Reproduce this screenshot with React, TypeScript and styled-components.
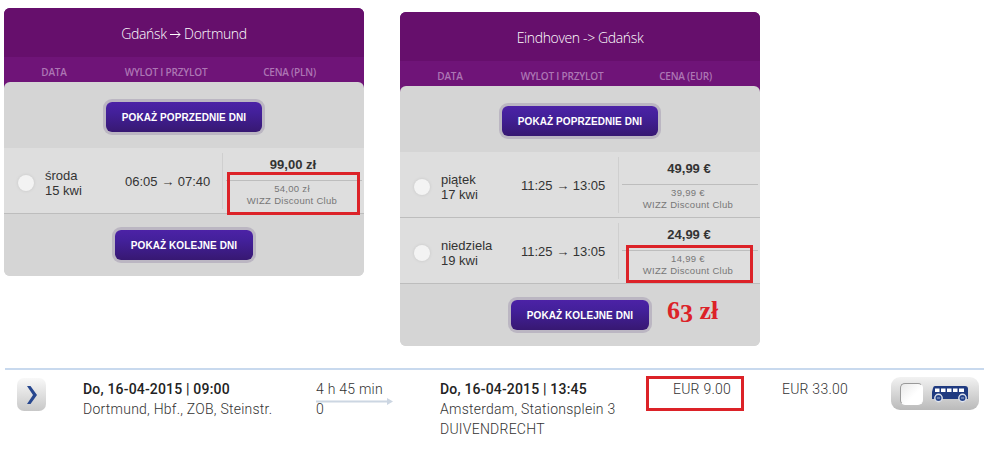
import React, { FunctionComponent } from "react";
import styled, { createGlobalStyle } from "styled-components";

interface Flight {
	day: string;
	date: string;
	hours: string;
	price: string;
	discount: string;
	marked?: boolean;
	wideMark?: boolean;
}

interface FlightCardProps {
	title: React.ReactNode;
	currency: string;
	flights: Flight[];
	children?: React.ReactNode;
}

const FlightCard: FunctionComponent<FlightCardProps> = ({
	title,
	currency,
	flights,
	children,
}) => (
	<Card>
		<Title>{title}</Title>
		<Columns>
			<Column>DATA</Column>
			<Column>WYLOT I PRZYLOT</Column>
			<Column>CENA ({currency})</Column>
		</Columns>
		<CardBody>
			<ButtonBar>
				<DaysButton $width={156}>POKAŻ POPRZEDNIE DNI</DaysButton>
			</ButtonBar>
			{flights.map((flight) => (
				<FlightRow key={flight.date}>
					<Radio />
					<Day>
						{flight.day}
						<br />
						{flight.date}
					</Day>
					<Hours>{flight.hours}</Hours>
					<Prices>
						<Price>{flight.price}</Price>
						<Discount>
							{flight.discount}
							<br />
							WIZZ Discount Club
							{flight.marked && <Mark $wide={flight.wideMark} />}
						</Discount>
					</Prices>
				</FlightRow>
			))}
			<ButtonBar>
				<DaysButton $width={138}>POKAŻ KOLEJNE DNI</DaysButton>
				{children}
			</ButtonBar>
		</CardBody>
	</Card>
);

const TitleArrow = () => (
	<svg width="11" height="9" viewBox="0 0 11 9">
		<path d="M0 4.500h10M6.500 1l3.500 3.500L6.500 8" fill="none" stroke="#fff" />
	</svg>
);

const BusIcon = () => (
	<svg width="37" height="18" viewBox="0 0 37 18">
		<path d="M3 1h30q3 0 3 3v10H0V7l1-4q.500-2 2-2z" fill="#1f3a80" />
		<path
			d="M3 3.500h4.500V7H3zM9 3.500h4.500V7H9zM15 3.500h4.500V7H15zM21 3.500h4.500V7H21zM27 3.500h5V7h-5z"
			fill="#fff"
		/>
		<circle cx="6.500" cy="13" r="3.700" fill="#27458c" stroke="#dfe3ec" strokeWidth="1.400" />
		<circle cx="30.500" cy="13" r="3.700" fill="#27458c" stroke="#dfe3ec" strokeWidth="1.400" />
		<path d="M5 13h3M29 13h3" stroke="#aab6d2" />
	</svg>
);

const App = () => (
	<Page>
		<GlobalStyle />
		<Cards>
			<FlightCard
				title={
					<>
						Gdańsk <TitleArrow /> Dortmund
					</>
				}
				currency="PLN"
				flights={[
					{
						day: "środa",
						date: "15 kwi",
						hours: "06:05 → 07:40",
						price: "99,00 zł",
						discount: "54,00 zł",
						marked: true,
						wideMark: true,
					},
				]}
			/>
			<FlightCard
				title="Eindhoven -> Gdańsk"
				currency="EUR"
				flights={[
					{
						day: "piątek",
						date: "17 kwi",
						hours: "11:25 → 13:05",
						price: "49,99 €",
						discount: "39,99 €",
					},
					{
						day: "niedziela",
						date: "19 kwi",
						hours: "11:25 → 13:05",
						price: "24,99 €",
						discount: "14,99 €",
						marked: true,
					},
				]}
			>
				<Note>
					6<Lowered>3</Lowered> zł
				</Note>
			</FlightCard>
		</Cards>
		<BusRow>
			<Expand>
				<svg width="12" height="20" viewBox="0 0 12 20">
					<path d="M0 1h3.500l6.500 9-6.500 9H0l6-9z" fill="#27478f" />
				</svg>
			</Expand>
			<Stop>
				<When>Do, 16-04-2015 | 09:00</When>
				<Place>Dortmund, Hbf., ZOB, Steinstr.</Place>
			</Stop>
			<Duration>
				<Place>4 h 45 min</Place>
				<Place>0</Place>
				<Arrow width="77" height="7" viewBox="0 0 77 7">
					<path d="M0 2.500h71V0l6 3.500L71 7V4.500H0z" fill="#ccd6e2" />
				</Arrow>
			</Duration>
			<Stop>
				<When>Do, 16-04-2015 | 13:45</When>
				<Place>Amsterdam, Stationsplein 3</Place>
				<Place>DUIVENDRECHT</Place>
			</Stop>
			<Fare $marked>EUR 9.00</Fare>
			<Fare>EUR 33.00</Fare>
			<BusButton>
				<Checkbox />
				<BusIcon />
			</BusButton>
		</BusRow>
	</Page>
);

const GlobalStyle = createGlobalStyle`
	body {
		margin: 0;
		background: #fff;
	}

	* {
		box-sizing: border-box;
	}
`;

const Page = styled.div`
	width: 984px;
	height: 451px;
	overflow: hidden;
	font-family: "Liberation Sans", Arial, sans-serif;
`;

const Cards = styled.div`
	display: flex;
	align-items: flex-start;
	gap: 36px;
	height: 368px;
	padding: 8px 0 0 4px;
`;

const Card = styled.div`
	width: 360px;
	border-radius: 6px;
	background: linear-gradient(#6f1478 86px, #d5d5d5 86px);

	& + & {
		margin-top: 4px;
	}
`;

const Title = styled.div`
	height: 49px;
	padding-top: 2px;
	border-radius: 6px 6px 0 0;
	background: #660f6c;
	color: #fff;
	font: 300 14px/48px "Open Sans", sans-serif;
	letter-spacing: -0.36px;
	text-align: center;
`;

const Columns = styled.div`
	display: grid;
	grid-template-columns: 100px 124px 123px;
	height: 25px;
	background: #6f1478;
	color: #ad76b4;
	font: 600 10px/30px "Open Sans", sans-serif;
	letter-spacing: -0.2px;
	text-align: center;
`;

const Column = styled.div`
	white-space: nowrap;
`;

const CardBody = styled.div`
	border-radius: 6px;
	background: #d5d5d5;
`;

const ButtonBar = styled.div`
	position: relative;
	display: flex;
	justify-content: center;
	height: 66px;
	padding-top: 20px;

	&:last-child {
		height: 62px;
		padding-top: 16px;
	}
`;

const DaysButton = styled.button<{ $width: number }>`
	width: ${({ $width }) => $width}px;
	height: 30px;
	padding: 0;
	border: none;
	border-radius: 6px;
	background: linear-gradient(#4c22a6, #43209a 35%, #371872);
	box-shadow: 0 0 0 3px #bbb6c2;
	color: #fff;
	font: bold 10px "Liberation Sans", Arial, sans-serif;
	letter-spacing: 0.08px;
	white-space: nowrap;
`;

const Note = styled.div`
	position: absolute;
	left: 267px;
	top: 12px;
	color: #dc2228;
	font: bold 26px/30px "Liberation Serif", Georgia, serif;
	white-space: nowrap;
`;

const Lowered = styled.span`
	line-height: 1;
	vertical-align: -3px;
`;

const FlightRow = styled.div`
	display: grid;
	grid-template-columns: 41px 80px 97px 140px;
	align-items: center;
	height: 66px;
	border-bottom: 1px solid #bdbdbd;
	background: #dedede;
	color: #333;
	font-size: 13px;
	line-height: 15px;

	& + & {
		height: 66px;
	}
`;

const Radio = styled.div`
	width: 16px;
	height: 16px;
	margin: 4px 0 0 14px;
	border-radius: 50%;
	background: #f3f3f3;
	box-shadow: 0 0 3px #c4c4c4;
`;

const Day = styled.div`
	padding-top: 5px;
`;

const Hours = styled.div`
	padding-top: 2px;
	white-space: nowrap;
`;

const Prices = styled.div`
	height: 56px;
	border-left: 1px solid #cfcfcf;
	text-align: center;
	padding-left: 3px;
`;

const Price = styled.div`
	height: 28px;
	padding-right: 2px;
	border-bottom: 1px solid #bdbdbd;
	font-weight: bold;
	line-height: 23px;
`;

const Discount = styled.div`
	position: relative;
	padding: 2px 4px 0 0;
	color: #777;
	font-size: 9.5px;
	letter-spacing: 0.3px;
	line-height: 12px;
`;

const Mark = styled.div<{ $wide?: boolean }>`
	position: absolute;
	left: ${({ $wide }) => ($wide ? 1 : 4)}px;
	top: ${({ $wide }) => ($wide ? -9 : -6)}px;
	width: ${({ $wide }) => ($wide ? 133 : 127)}px;
	height: ${({ $wide }) => ($wide ? 43 : 38)}px;
	border: 3px solid #dc2228;
`;

const BusRow = styled.div`
	display: grid;
	grid-template-columns: 78px 233px 124px 206px 98px 147px 89px;
	align-items: start;
	margin-left: 5px;
	height: 83px;
	border-top: 2px solid #c8d9ee;
	font-family: Roboto, sans-serif;
	font-size: 14px;
	letter-spacing: 0.24px;
	line-height: 20px;
`;

const Expand = styled.div`
	display: flex;
	align-items: center;
	justify-content: center;
	width: 29px;
	height: 33px;
	margin: 8px 0 0 12px;
	padding-left: 3px;
	border-radius: 7px;
	background: linear-gradient(#f8f8f8, #c8c8c8);
`;

const Stop = styled.div`
	padding-top: 9px;
	white-space: nowrap;
`;

const Duration = styled(Stop)`
	position: relative;
`;

const When = styled.div`
	color: #222;
	font-weight: 500;
	letter-spacing: 0.18px;
`;

const Place = styled.div`
	color: #333;
	font-weight: 300;
`;

const Arrow = styled.svg`
	position: absolute;
	left: 0;
	top: 28px;
`;

const Fare = styled.div<{ $marked?: boolean }>`
	height: 35px;
	margin-top: 6px;
	padding: ${({ $marked }) => ($marked ? "0 10px 0 0" : "3px 43px 0 0")};
	border: ${({ $marked }) => ($marked ? "3px solid #dc2228" : "none")};
	color: #333;
	font-weight: 300;
	text-align: right;
`;

const BusButton = styled.div`
	display: flex;
	align-items: center;
	gap: 9px;
	width: 88px;
	height: 33px;
	margin-top: 7px;
	padding-left: 9px;
	border-radius: 9px;
	background: linear-gradient(#f2f2f2, #bababa);
`;

const Checkbox = styled.div`
	width: 23px;
	height: 22px;
	border: 1px solid #999;
	border-right-color: #fff;
	border-bottom-color: #fff;
	border-radius: 5px;
	background: linear-gradient(135deg, #e9e9e9, #fff 60%);
`;

export default App;
